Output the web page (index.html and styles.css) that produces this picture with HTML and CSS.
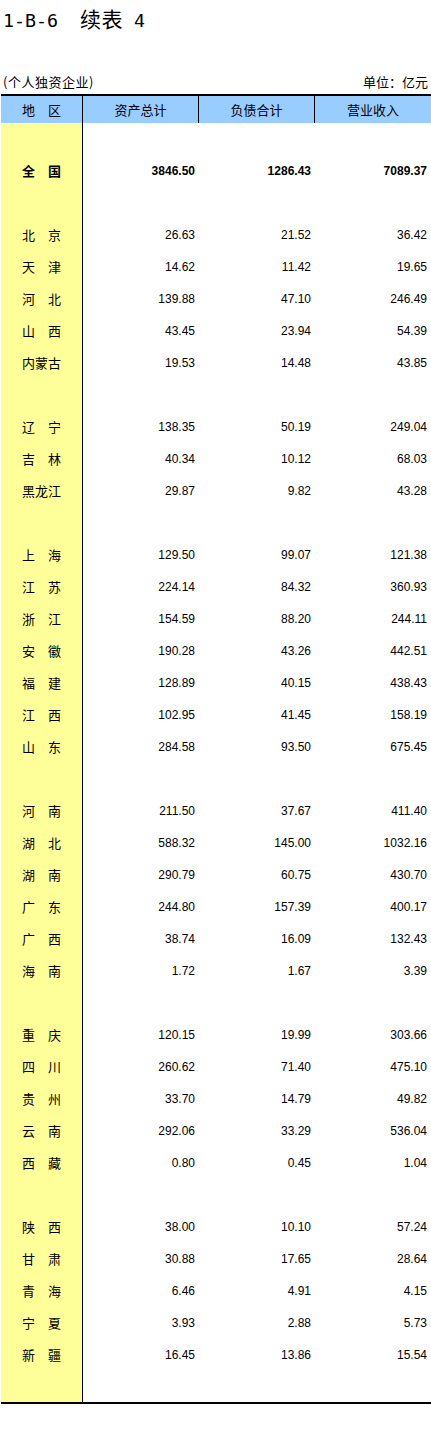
FILE: index.html
```html
<!DOCTYPE html>
<html lang="zh">
<head>
<meta charset="utf-8">
<link rel="stylesheet" href="styles.css">
</head>
<body>
<div class="page">
  <div class="title"><span class="mono">1-B-6  </span><span class="cjk">续表</span><span class="mono"> 4</span></div>
  <div class="caption"><span class="sub">(个人独资企业)</span><span>单位：亿元</span></div>
  <div class="table">
    <div class="row head"><div class="c">地　区</div><div class="c">资产总计</div><div class="c">负债合计</div><div class="c">营业收入</div></div>
    <div class="row"><div class="n"></div></div>
    <div class="row total"><div class="n">全　国</div><div class="v">3846.50</div><div class="v">1286.43</div><div class="v">7089.37</div></div>
    <div class="row"><div class="n"></div></div>
    <div class="row"><div class="n">北　京</div><div class="v">26.63</div><div class="v">21.52</div><div class="v">36.42</div></div>
    <div class="row"><div class="n">天　津</div><div class="v">14.62</div><div class="v">11.42</div><div class="v">19.65</div></div>
    <div class="row"><div class="n">河　北</div><div class="v">139.88</div><div class="v">47.10</div><div class="v">246.49</div></div>
    <div class="row"><div class="n">山　西</div><div class="v">43.45</div><div class="v">23.94</div><div class="v">54.39</div></div>
    <div class="row"><div class="n">内蒙古</div><div class="v">19.53</div><div class="v">14.48</div><div class="v">43.85</div></div>
    <div class="row"><div class="n"></div></div>
    <div class="row"><div class="n">辽　宁</div><div class="v">138.35</div><div class="v">50.19</div><div class="v">249.04</div></div>
    <div class="row"><div class="n">吉　林</div><div class="v">40.34</div><div class="v">10.12</div><div class="v">68.03</div></div>
    <div class="row"><div class="n">黑龙江</div><div class="v">29.87</div><div class="v">9.82</div><div class="v">43.28</div></div>
    <div class="row"><div class="n"></div></div>
    <div class="row"><div class="n">上　海</div><div class="v">129.50</div><div class="v">99.07</div><div class="v">121.38</div></div>
    <div class="row"><div class="n">江　苏</div><div class="v">224.14</div><div class="v">84.32</div><div class="v">360.93</div></div>
    <div class="row"><div class="n">浙　江</div><div class="v">154.59</div><div class="v">88.20</div><div class="v">244.11</div></div>
    <div class="row"><div class="n">安　徽</div><div class="v">190.28</div><div class="v">43.26</div><div class="v">442.51</div></div>
    <div class="row"><div class="n">福　建</div><div class="v">128.89</div><div class="v">40.15</div><div class="v">438.43</div></div>
    <div class="row"><div class="n">江　西</div><div class="v">102.95</div><div class="v">41.45</div><div class="v">158.19</div></div>
    <div class="row"><div class="n">山　东</div><div class="v">284.58</div><div class="v">93.50</div><div class="v">675.45</div></div>
    <div class="row"><div class="n"></div></div>
    <div class="row"><div class="n">河　南</div><div class="v">211.50</div><div class="v">37.67</div><div class="v">411.40</div></div>
    <div class="row"><div class="n">湖　北</div><div class="v">588.32</div><div class="v">145.00</div><div class="v">1032.16</div></div>
    <div class="row"><div class="n">湖　南</div><div class="v">290.79</div><div class="v">60.75</div><div class="v">430.70</div></div>
    <div class="row"><div class="n">广　东</div><div class="v">244.80</div><div class="v">157.39</div><div class="v">400.17</div></div>
    <div class="row"><div class="n">广　西</div><div class="v">38.74</div><div class="v">16.09</div><div class="v">132.43</div></div>
    <div class="row"><div class="n">海　南</div><div class="v">1.72</div><div class="v">1.67</div><div class="v">3.39</div></div>
    <div class="row"><div class="n"></div></div>
    <div class="row"><div class="n">重　庆</div><div class="v">120.15</div><div class="v">19.99</div><div class="v">303.66</div></div>
    <div class="row"><div class="n">四　川</div><div class="v">260.62</div><div class="v">71.40</div><div class="v">475.10</div></div>
    <div class="row"><div class="n">贵　州</div><div class="v">33.70</div><div class="v">14.79</div><div class="v">49.82</div></div>
    <div class="row"><div class="n">云　南</div><div class="v">292.06</div><div class="v">33.29</div><div class="v">536.04</div></div>
    <div class="row"><div class="n">西　藏</div><div class="v">0.80</div><div class="v">0.45</div><div class="v">1.04</div></div>
    <div class="row"><div class="n"></div></div>
    <div class="row"><div class="n">陕　西</div><div class="v">38.00</div><div class="v">10.10</div><div class="v">57.24</div></div>
    <div class="row"><div class="n">甘　肃</div><div class="v">30.88</div><div class="v">17.65</div><div class="v">28.64</div></div>
    <div class="row"><div class="n">青　海</div><div class="v">6.46</div><div class="v">4.91</div><div class="v">4.15</div></div>
    <div class="row"><div class="n">宁　夏</div><div class="v">3.93</div><div class="v">2.88</div><div class="v">5.73</div></div>
    <div class="row"><div class="n">新　疆</div><div class="v">16.45</div><div class="v">13.86</div><div class="v">15.54</div></div>
    <div class="row last"><div class="n"></div></div>
  </div>
</div>
</body>
</html>
```
FILE: styles.css
```css
html, body {
  margin: 0;
  padding: 0;
  background: #ffffff;
}
.page {
  padding-left: 1px;
  color: #000;
  font-family: "Liberation Sans", "Noto Sans CJK SC", sans-serif;
}
.title {
  height: 36px;
  line-height: 36px;
  padding-left: 2px;
  white-space: pre;
}
.title .mono {
  font-family: "DejaVu Sans Mono", "Noto Sans CJK SC", monospace;
  font-size: 18.3px;
}
.title .cjk {
  font-family: "Noto Sans CJK SC", sans-serif;
  font-size: 21px;
  letter-spacing: 0.5px;
}
.caption {
  margin-top: 38px;
  height: 16px;
  line-height: 16px;
  margin-bottom: 4px;
  display: flex;
  justify-content: space-between;
  padding-right: 3px;
  font-size: 13px;
  font-family: "Noto Sans CJK SC", sans-serif;
}
.caption .sub {
  padding-left: 2px;
  letter-spacing: 0.5px;
}
.table {
  border-top: 2px solid #000;
  border-bottom: 2px solid #000;
}
.row {
  display: grid;
  grid-template-columns: 82px 116px 116px 1fr;
  height: 32px;
  line-height: 32px;
}
.row.last {
  height: 31px;
}
.row.head {
  height: 27px;
  line-height: 27px;
  background: #99ccff;
}
.head .c {
  text-align: center;
  font-size: 13px;
  font-family: "Noto Sans CJK SC", sans-serif;
  border-right: 1px solid #000;
}
.head .c:last-child {
  border-right: none;
}
.n {
  background: #ffff99;
  border-right: 1px solid #000;
  text-align: center;
  font-size: 13px;
  font-family: "Noto Sans CJK SC", sans-serif;
}
.v {
  text-align: right;
  padding-right: 4px;
  font-size: 12px;
}
.total .n,
.total .v {
  font-weight: bold;
}
```
